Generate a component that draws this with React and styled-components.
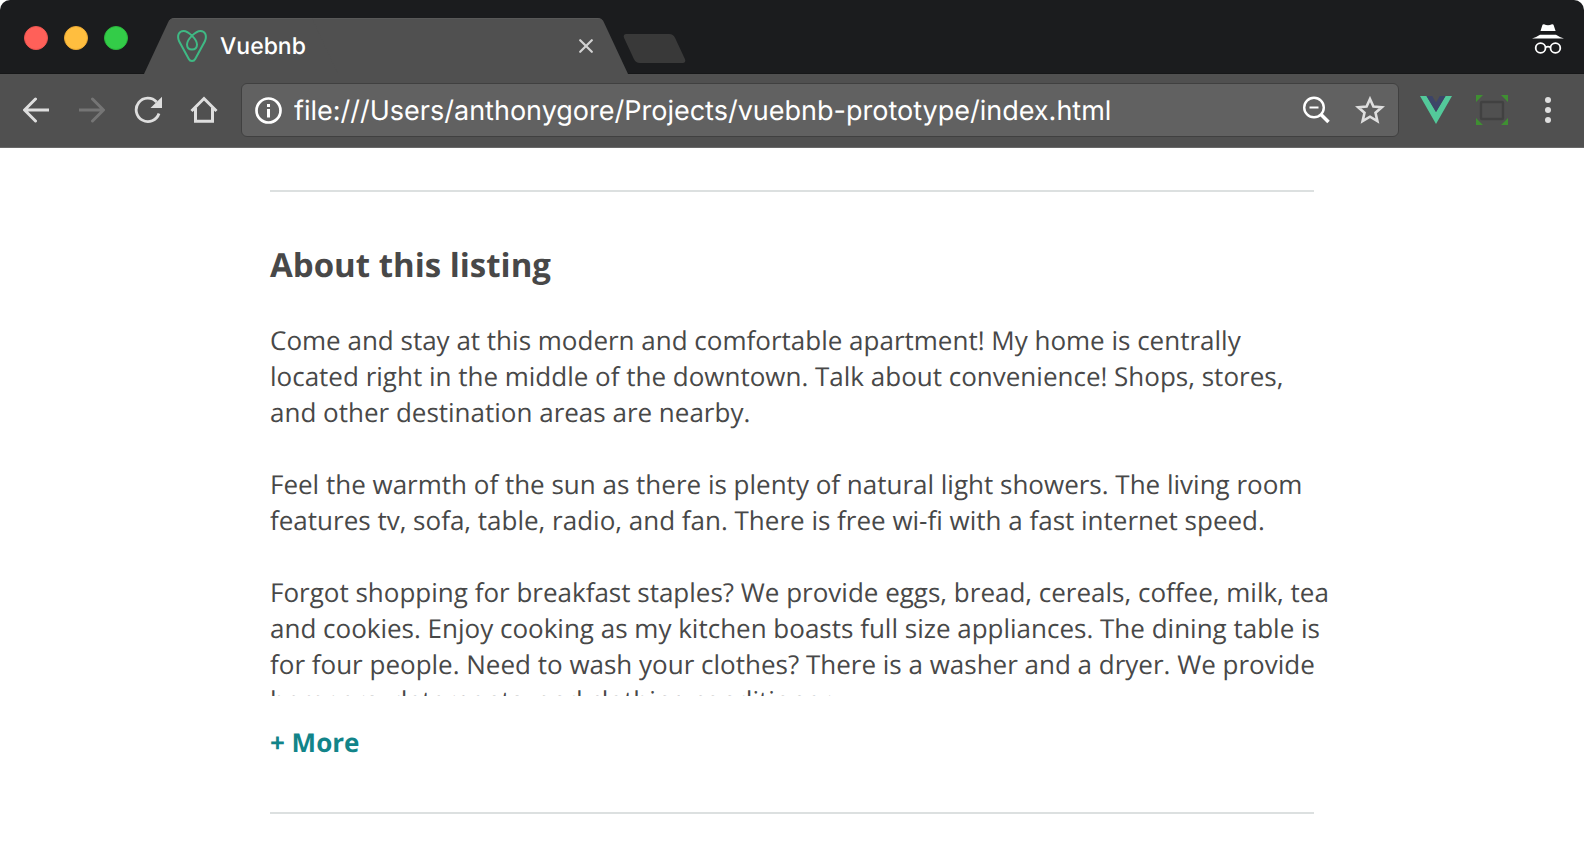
import React, { useState } from "react";
import styled, { createGlobalStyle } from "styled-components";

const GlobalStyle = createGlobalStyle`
  *, *::before, *::after { box-sizing: border-box; }
  body { margin: 0; background: #fff; text-rendering: geometricPrecision; }
  button { padding: 0; border: 0; background: none; font: inherit; cursor: pointer; }
  button, input { text-rendering: inherit; }
  svg { display: block; }
`;

const chromeFont = `Inter, "Liberation Sans", sans-serif`;

const Window = styled.div`
  font-family: "Open Sans", sans-serif;
  color: #484848;
`;

const TitleBar = styled.header`
  display: flex;
  align-items: flex-end;
  height: 74px;
  padding: 0 20px 0 24px;
  border-bottom: 1px solid #161718;
  border-radius: 10px 10px 0 0;
  background: #1b1c1e;
`;

const WindowControls = styled.div`
  display: flex;
  gap: 16px;
  align-self: center;
  margin-right: 16px;
  padding-top: 2px;
`;

const ControlDot = styled.button`
  width: 24px;
  height: 24px;
  border: 1px solid ${(p) => p.$edge};
  border-radius: 50%;
  background: ${(p) => p.$color};
`;

const Tab = styled.div`
  position: relative;
  isolation: isolate;
  display: flex;
  align-items: center;
  flex: 0 1 484px;
  height: 56px;
  margin-bottom: -1px;
  padding: 0 35px 0 33px;

  &::before, &::after {
    content: "";
    position: absolute;
    z-index: -1;
    top: 0;
    bottom: 0;
    width: 60%;
    background: #505050;
    border-top: 1px solid #585858;
  }
  &::before {
    left: 0;
    border-top-left-radius: 4px;
    transform: skewX(-25deg);
    transform-origin: bottom;
  }
  &::after {
    right: 0;
    border-top-right-radius: 4px;
    transform: skewX(25deg);
    transform-origin: bottom;
  }
`;

const TabTitle = styled.span`
  flex: 1;
  margin-left: 13px;
  font: 500 23px/32px ${chromeFont};
  color: #fff;
`;

const NewTab = styled.button`
  width: 51px;
  height: 29px;
  margin: 0 auto 10px 1px;
  border-radius: 4px;
  background: #393939;
  transform: skewX(25deg);
`;

const Incognito = styled.div`
  margin-bottom: 19px;
`;

const Toolbar = styled.nav`
  display: flex;
  align-items: center;
  height: 74px;
  padding: 0 20px 2px 22px;
  border-bottom: 1px solid #686868;
  background: #505050;
`;

const ToolGroup = styled.div`
  display: flex;
  align-items: center;
  gap: ${(p) => p.$gap}px;
`;

const IconButton = styled.button`
  display: grid;
  place-items: center;
  width: ${(p) => p.$size || 28}px;
  height: 32px;
  color: ${(p) => p.$color || "#dedede"};
`;

const AddressBar = styled.div`
  display: flex;
  align-items: center;
  flex: 1;
  min-width: 0;
  height: 54px;
  margin: 0 21px 0 23px;
  padding: 1px 13px 0;
  border: 1px solid #404040;
  border-radius: 6px;
  background: #616161;
`;

const AddressInput = styled.input`
  flex: 1;
  min-width: 0;
  margin: 0 12px;
  padding: 2px 0 0;
  border: 0;
  outline: 0;
  background: none;
  font: 400 27px/36px ${chromeFont};
  color: #fff;
`;

const Page = styled.main`
  width: calc(100% - 48px);
  max-width: 1044px;
  margin: 0 auto;
  padding: 42px 0 38px;
`;

const Divider = styled.hr`
  height: 2px;
  margin: 0;
  border: 0;
  background: #dce0e0;
`;

const About = styled.section`
  padding: 50px 0 52px;
`;

const Heading = styled.h1`
  margin: 0 0 34px;
  font-size: 33px;
  line-height: 46px;
  font-weight: 700;
`;

const Description = styled.div`
  max-height: ${(p) => (p.$open ? "none" : "374px")};
  margin-right: -16px;
  overflow: hidden;
  font-size: 26px;
  line-height: 36px;

  p { margin: 0 0 36px; }
  p:last-child { margin: 0; }
`;

const MoreButton = styled.button`
  display: block;
  margin-top: 28px;
  && {
    font-size: 26px;
    line-height: 36px;
    font-weight: 700;
  }
  color: #128489;
`;

const TabLogo = () => (
  <svg width="30" height="32" viewBox="0 0 30 32" fill="none" stroke="#3fb984" strokeWidth="2" aria-hidden="true">
    <path d="M15 31C13.5 31 12.5 30.5 11.8 29L2 11C-.2 5.500 2 1 6.500 1C11.500 1 20 9.500 20 14.500C20 17.500 18 19.500 15 19.500S10 17.500 10 14.500C10 9.500 18.500 1 23.500 1C28 1 30.200 5.500 28 11L18.200 29C17.500 30.500 16.500 31 15 31Z" />
  </svg>
);

const CloseIcon = () => (
  <svg width="14" height="14" viewBox="0 0 14 14" stroke="#d2d2d2" strokeWidth="2.200" strokeLinecap="round">
    <path d="M1.200 1.200L12.800 12.800M12.800 1.200L1.200 12.800" />
  </svg>
);

const IncognitoIcon = () => (
  <svg width="32" height="30" viewBox="0 0 32 30" fill="#fff" role="img" aria-label="Incognito">
    <path d="M8.500 7L10.500 .8Q11.200 0 12 .3Q16 2 20 .3Q20.900 0 21.500 .8L23.600 7Z" />
    <path d="M0 14.500Q5 13 8 10.800H24Q27 13 32 14.500Z" />
    <g fill="none" stroke="#fff" strokeWidth="1.800">
      <circle cx="8.600" cy="24" r="4.900" />
      <circle cx="23.400" cy="24" r="4.900" />
      <path d="M13.500 23.300Q16 21.800 18.500 23.300" />
    </g>
  </svg>
);

const ArrowIcon = ({ forward }) => (
  <svg width="26" height="26" viewBox="0 0 26 26" fill="none" stroke="currentColor" strokeWidth="3">
    <path strokeLinecap="round" strokeLinejoin="miter" d={forward ? "M0 13H24M13.500 2L24.500 13L13.500 24" : "M26 13H2M12.500 2L1.500 13L12.500 24"} />
  </svg>
);

const ReloadIcon = () => (
  <svg width="28" height="28" viewBox="0 0 28 28">
    <path d="M25 17.500A11.700 11.700 0 1 1 22.600 6" fill="none" stroke="currentColor" strokeWidth="2.800" />
    <path d="M28 .8V12H16.500Z" fill="currentColor" />
  </svg>
);

const HomeIcon = () => (
  <svg width="28" height="28" viewBox="0 0 28 28" fill="none" stroke="currentColor" strokeWidth="3">
    <path d="M1.500 15L14 2.500L26.500 15M5.500 12V25.200H22.500V12" />
  </svg>
);

const InfoIcon = () => (
  <svg width="27" height="27" viewBox="0 0 27 27" fill="#fff" aria-hidden="true">
    <circle cx="13.500" cy="13.500" r="12" fill="none" stroke="#fff" strokeWidth="2.700" />
    <rect x="12" y="7" width="3" height="3" />
    <rect x="12" y="12" width="3" height="8.500" />
  </svg>
);

const ZoomOutIcon = () => (
  <svg width="28" height="28" viewBox="0 0 28 28" fill="none" stroke="#fff" strokeWidth="2.400">
    <circle cx="12" cy="11.500" r="9.800" />
    <path d="M7.500 11.500H16.500" strokeWidth="2" />
    <path d="M19 18.500L26.500 26" strokeWidth="3.600" />
  </svg>
);

const StarIcon = () => (
  <svg width="30" height="28" viewBox="0 0 30 28" fill="none" stroke="#dedede" strokeWidth="2.600">
    <path d="M15 3L18.400 10.600L26.800 11.300L20.500 16.700L22.400 25L15 20.700L7.600 25L9.500 16.700L3.200 11.300L11.600 10.600Z" />
  </svg>
);

const VueIcon = () => (
  <svg width="32" height="28" viewBox="0 0 32 28">
    <path d="M0 0H6.500L16 16L25.500 0H32L16 28Z" fill="#53c99a" />
    <path d="M6.500 0H12.200L16 6.500L19.800 0H25.500L16 16Z" fill="#3d4468" />
  </svg>
);

const ResizeIcon = () => (
  <svg width="32" height="30" viewBox="0 0 32 30">
    <rect x="5" y="7" width="22" height="17" rx="1" fill="none" stroke="#414141" strokeWidth="2.400" />
    <path d="M0 0H7L0 7ZM32 0V7L25 0ZM0 30V23L7 30ZM32 30H25L32 23Z" fill="#3f8f32" />
  </svg>
);

const DotsIcon = () => (
  <svg width="6" height="26" viewBox="0 0 6 26" fill="currentColor">
    <circle cx="3" cy="3" r="3" />
    <circle cx="3" cy="13" r="3" />
    <circle cx="3" cy="23" r="3" />
  </svg>
);

const paragraphs = [
  "Come and stay at this modern and comfortable apartment! My home is centrally located right in the middle of the downtown. Talk about convenience! Shops, stores, and other destination areas are nearby.",
  "Feel the warmth of the sun as there is plenty of natural light showers. The living room features tv, sofa, table, radio, and fan. There is free wi-fi with a fast internet speed.",
  "Forgot shopping for breakfast staples? We provide eggs, bread, cereals, coffee, milk, tea and cookies. Enjoy cooking as my kitchen boasts full size appliances. The dining table is for four people. Need to wash your clothes? There is a washer and a dryer. We provide hampers, detergents, and clothing conditioner.",
];

export default function App() {
  const [open, setOpen] = useState(false);
  return (
    <Window>
      <GlobalStyle />
      <TitleBar>
        <WindowControls>
          <ControlDot $color="#ff6059" $edge="#ec5550" aria-label="Close window" />
          <ControlDot $color="#ffbe3f" $edge="#eaa834" aria-label="Minimize window" />
          <ControlDot $color="#33cc48" $edge="#2bb63c" aria-label="Zoom window" />
        </WindowControls>
        <Tab>
          <TabLogo />
          <TabTitle>Vuebnb</TabTitle>
          <button aria-label="Close tab"><CloseIcon /></button>
        </Tab>
        <NewTab aria-label="New tab" />
        <Incognito><IncognitoIcon /></Incognito>
      </TitleBar>
      <Toolbar>
        <ToolGroup $gap={28}>
          <IconButton aria-label="Back"><ArrowIcon /></IconButton>
          <IconButton aria-label="Forward" $color="#757575"><ArrowIcon forward /></IconButton>
          <IconButton aria-label="Reload"><ReloadIcon /></IconButton>
          <IconButton aria-label="Home"><HomeIcon /></IconButton>
        </ToolGroup>
        <AddressBar>
          <InfoIcon />
          <AddressInput aria-label="Address" defaultValue="file:///Users/anthonygore/Projects/vuebnb-prototype/index.html" />
          <ToolGroup $gap={24}>
            <IconButton $size={30} aria-label="Zoom out"><ZoomOutIcon /></IconButton>
            <IconButton $size={30} aria-label="Bookmark"><StarIcon /></IconButton>
          </ToolGroup>
        </AddressBar>
        <ToolGroup $gap={24}>
          <IconButton $size={32} aria-label="Vue devtools"><VueIcon /></IconButton>
          <IconButton $size={32} aria-label="Window resizer"><ResizeIcon /></IconButton>
          <IconButton $size={32} aria-label="Menu"><DotsIcon /></IconButton>
        </ToolGroup>
      </Toolbar>
      <Page>
        <Divider />
        <About>
          <Heading>About this listing</Heading>
          <Description $open={open}>
            {paragraphs.map((text) => <p key={text}>{text}</p>)}
          </Description>
          <MoreButton onClick={() => setOpen(!open)}>{open ? "- Less" : "+ More"}</MoreButton>
        </About>
        <Divider />
      </Page>
    </Window>
  );
}
